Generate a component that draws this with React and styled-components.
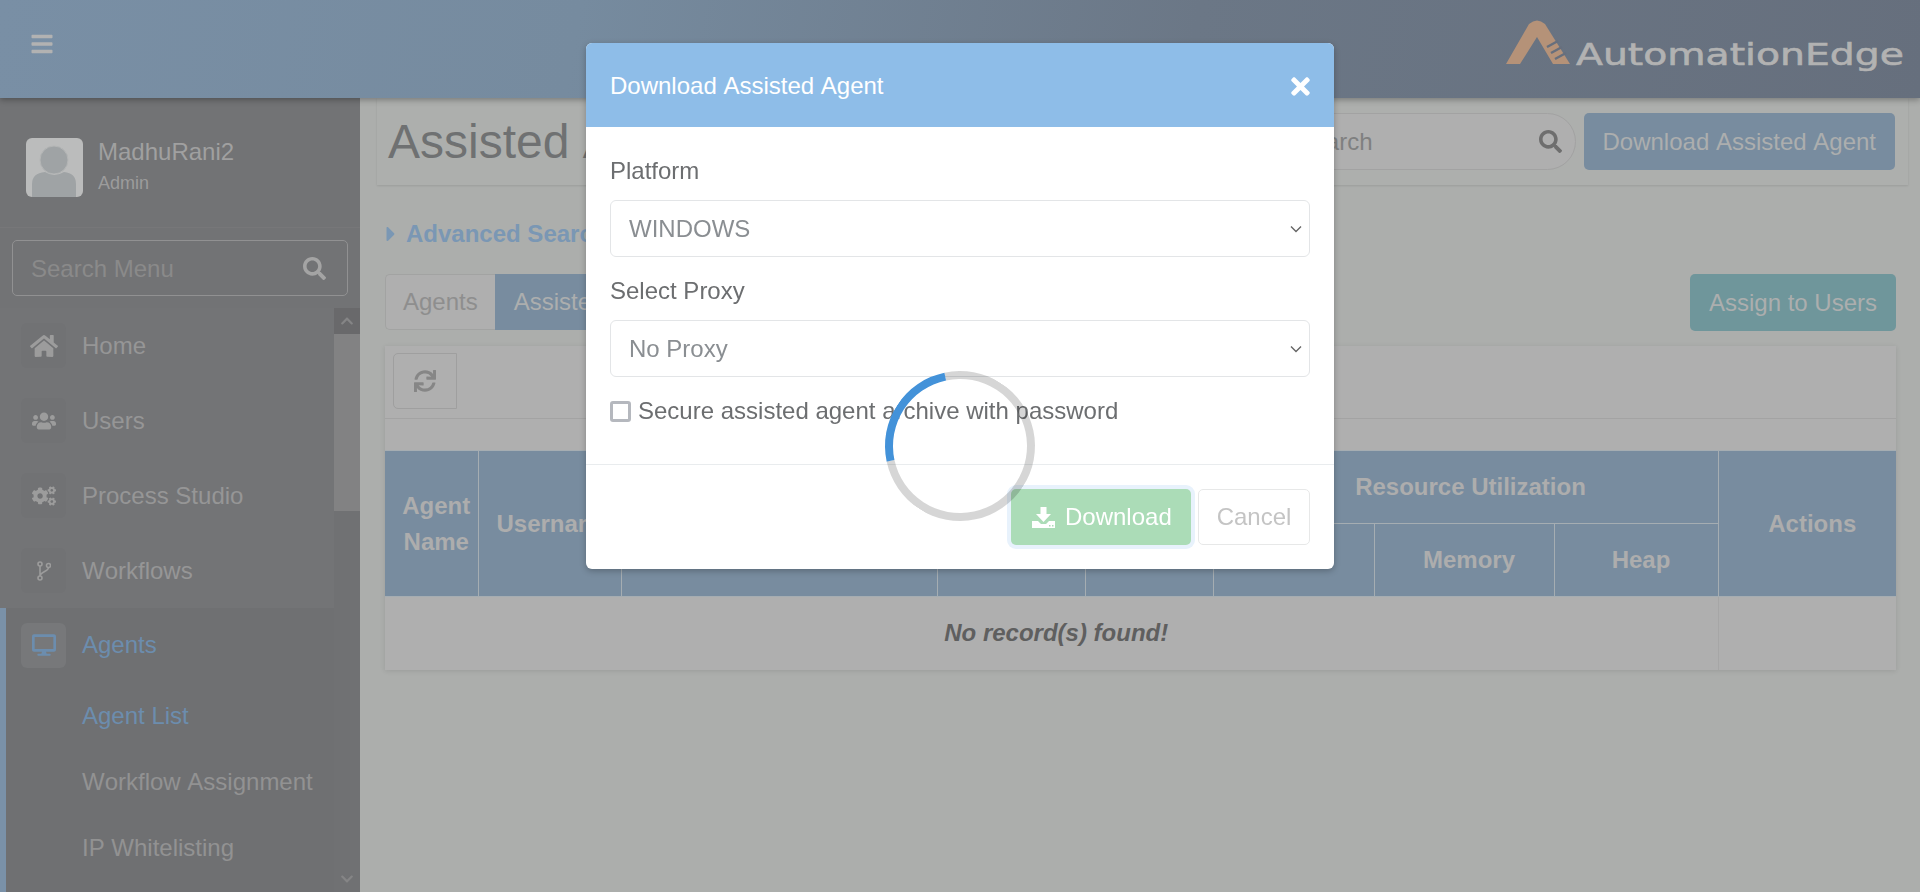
import React from 'react';
import styled, { createGlobalStyle } from 'styled-components';
import {
  FaBars, FaSearch, FaHome, FaUsers, FaCogs, FaDesktop, FaSync,
  FaTimes, FaCaretRight, FaChevronUp, FaChevronDown,
} from 'react-icons/fa';

const Global = createGlobalStyle`
  * { box-sizing: border-box; }
  html, body { margin: 0; padding: 0; height: 100%; overflow: hidden; }
  body { font-family: "Liberation Sans", Arial, sans-serif; font-size: 24px; font-kerning: none; background: #acaeac; }
`;

const Page = styled.div`
  height: 892px;
  display: flex;
  flex-direction: column;
  overflow: hidden;
`;

const TopBar = styled.header`
  flex: 0 0 98px;
  display: flex;
  align-items: center;
  justify-content: space-between;
  padding: 0 15px 0 30px;
  background: linear-gradient(100deg, #798fa5 0%, #768b9f 30%, #6b7786 62%, #666f7d 100%);
  box-shadow: 0 2px 6px rgba(0, 0, 0, 0.3);
  position: relative;
  z-index: 2;
  color: #b2b2b2;
`;

const MenuToggle = styled.span`
  display: flex;
  margin-top: -10px;
  font-size: 24px;
`;

const Logo = styled.svg`
  width: 400px;
  height: 54px;
  margin-top: -4px;
  display: block;
`;

const Body = styled.div`
  flex: 1;
  display: flex;
  min-height: 0;
`;

const Sidebar = styled.aside`
  flex: 0 0 360px;
  width: 360px;
  min-width: 0;
  display: flex;
  flex-direction: column;
  background: #727375;
  color: #9a9a9a;
`;

const UserPanel = styled.div`
  height: 130px;
  display: flex;
  align-items: flex-start;
  gap: 15px;
  padding: 40px 26px 0;
  border-bottom: 1px solid #777779;
`;

const Avatar = styled.svg`
  width: 57px;
  height: 59px;
  display: block;
  border-radius: 6px;
`;

const UserName = styled.div`
  font-size: 24px;
  line-height: 28px;
  color: #a0a0a0;
`;

const UserRole = styled.div`
  font-size: 18px;
  line-height: 24px;
  margin-top: 5px;
  color: #9c9c9c;
`;

const MenuSearch = styled.div`
  margin: 12px;
  height: 56px;
  display: flex;
  align-items: center;
  padding: 0 21px 0 18px;
  border: 1px solid #919192;
  border-radius: 5px;
  color: #a4a4a4;
  svg { font-size: 23px; flex: none; }
`;

const MenuInput = styled.input`
  flex: 1;
  width: 100%;
  min-width: 0;
  border: 0;
  outline: 0;
  background: transparent;
  font: inherit;
  padding: 2px 0 0;
  &::placeholder { color: #8a8a8a; opacity: 1; }
`;

const NavArea = styled.div`
  flex: 1;
  display: flex;
  min-height: 0;
`;

const NavList = styled.nav`
  flex: 1;
  display: flex;
  flex-direction: column;
  min-width: 0;
  background: #737476;
`;

const NavRow = styled.div`
  height: ${p => (p.$active ? 74 : 75)}px;
  display: flex;
  align-items: center;
  gap: 16px;
  padding-left: ${p => (p.$active ? 15 : 21)}px;
  color: ${p => (p.$active ? '#6c8dae' : '#969696')};
`;

const IconBox = styled.span`
  width: 45px;
  height: 45px;
  display: flex;
  align-items: center;
  justify-content: center;
  border-radius: 6px;
  background: ${p => (p.$active ? '#77787a' : '#717274')};
  color: ${p => (p.$active ? '#6c8dae' : '#9c9c9c')};
  font-size: ${p => p.$size || 24}px;
`;

const ActiveGroup = styled.div`
  flex: 1;
  background: #6f7072;
  border-left: 6px solid #7a91a8;
`;

const SubRow = styled.div`
  height: 66px;
  display: flex;
  align-items: center;
  padding-left: 76px;
  padding-top: 1px;
  color: ${p => (p.$active ? '#6c8dae' : '#929292')};
`;

const Rail = styled.div`
  flex: 0 0 26px;
  display: flex;
  flex-direction: column;
  background: #707173;
`;

const RailButton = styled.div`
  height: 26px;
  display: flex;
  align-items: center;
  justify-content: center;
  background: ${p => (p.$top ? '#69696b' : '#707173')};
  color: #858586;
  font-size: 14px;
  margin-top: ${p => (p.$top ? 0 : 'auto')};
`;

const RailThumb = styled.div`
  height: 177px;
  background: #828283;
`;

const Main = styled.main`
  flex: 1;
  min-width: 0;
  padding: 0 12px 0 17px;
`;

const TitleBar = styled.div`
  height: 87px;
  display: flex;
  align-items: center;
  gap: 8px;
  padding: 0 13px 0 11px;
  background: #adafad;
  box-shadow: 0 1px 2px rgba(0, 0, 0, 0.1);
`;

const Title = styled.h1`
  margin: 0 auto 0 0;
  font-size: 48px;
  font-weight: 400;
  color: #6f7172;
`;

const SearchPill = styled.div`
  width: 300px;
  height: 57px;
  display: flex;
  align-items: center;
  padding: 0 13px 0 20px;
  border: 1px solid #a2a2a2;
  border-radius: 29px;
  background: #afafaf;
  color: #6e6e6e;
  svg { font-size: 23px; flex: none; }
`;

const PillInput = styled.input`
  flex: 1;
  width: 100%;
  min-width: 0;
  border: 0;
  outline: 0;
  background: transparent;
  font: inherit;
  padding: 0;
  &::placeholder { color: #7f8080; opacity: 1; }
`;

const Button = styled.button`
  height: 57px;
  padding: 0 ${p => p.$pad || 19}px;
  border: 0;
  border-radius: 5px;
  font: inherit;
  color: #acaeae;
  background: ${p => p.$bg || '#788c9f'};
`;

const Content = styled.div`
  padding: 0 12px 0 8px;
`;

const Advanced = styled.div`
  height: 89px;
  padding-top: 8px;
  display: flex;
  align-items: center;
  gap: 6px;
  font-weight: 700;
  color: #7a97b4;
  svg { font-size: 24px; margin-left: -6px; margin-right: -3px; }
`;

const TabRow = styled.div`
  display: flex;
  align-items: flex-start;
  justify-content: space-between;
  height: 72px;
`;

const Tabs = styled.div`
  display: flex;
`;

const Tab = styled.div`
  height: 56px;
  display: flex;
  align-items: center;
  padding: 0 ${p => (p.$active ? 19 : 17)}px;
  border: ${p => (p.$active ? '0' : '1px solid #a2a3a2')};
  border-right: 0;
  border-radius: ${p => (p.$active ? '0' : '5px 0 0 5px')};
  background: ${p => (p.$active ? '#788c9f' : '#afafaf')};
  color: ${p => (p.$active ? '#acaeae' : '#8e8e8e')};
`;

const Card = styled.section`
  background: #afafaf;
  box-shadow: 0 1px 5px rgba(0, 0, 0, 0.1);
`;

const Toolbar = styled.div`
  height: 73px;
  padding: 7px 8px;
  border-bottom: 1px solid #a3a3a3;
`;

const RefreshButton = styled.div`
  width: 64px;
  height: 56px;
  display: flex;
  align-items: center;
  justify-content: center;
  border: 1px solid #9f9f9f;
  border-radius: 5px 0 0 5px;
  color: #868686;
  font-size: 22px;
`;

const Band = styled.div`
  height: 31px;
`;

const Table = styled.table`
  width: 100%;
  border-collapse: collapse;
  table-layout: fixed;
`;

const Th = styled.th`
  height: 73px;
  padding: 0 2px 0 12px;
  background: #788c9f;
  color: #adadad;
  font-weight: 700;
  line-height: 36px;
  text-align: center;
  border: 1px solid #a5adb2;
  &:first-child { border-left: 0; }
  &:last-child { border-right: 0; }
`;

const Td = styled.td`
  height: 73px;
  padding: 0 2px 0 12px;
  text-align: center;
  color: #5f5f5f;
  font-weight: 700;
  font-style: italic;
  border-left: ${p => (p.$split ? '1px solid #a6a6a6' : '0')};
`;

const Modal = styled.div`
  position: fixed;
  top: 43px;
  left: 586px;
  width: 748px;
  border-radius: 6px;
  overflow: hidden;
  background: #fff;
  box-shadow: 0 2px 6px rgba(0, 0, 0, 0.25);
  z-index: 5;
`;

const ModalHead = styled.div`
  height: 84px;
  display: flex;
  align-items: center;
  justify-content: space-between;
  padding: 2px 20px 0 24px;
  background: #8ebde8;
  color: #fff;
  svg { font-size: 27px; }
`;

const ModalBody = styled.div`
  padding: 25px 24px 33px;
  color: #6c6e70;
`;

const Label = styled.label`
  display: flex;
  align-items: center;
  height: 38px;
  margin-bottom: 10px;
`;

const Select = styled.select`
  display: block;
  width: 100%;
  height: 57px;
  margin-bottom: 15px;
  padding: 0 30px 0 18px;
  border: 1px solid #e3e5e7;
  border-radius: 6px;
  appearance: none;
  background: #fff url("data:image/svg+xml,%3Csvg xmlns='http://www.w3.org/2000/svg' viewBox='0 0 12 8'%3E%3Cpath d='M1 1.5l5 5 5-5' fill='none' stroke='%23666' stroke-width='1.4'/%3E%3C/svg%3E") no-repeat right 7px center / 12px 8px;
  font: inherit;
  color: #8a8e92;
`;

const CheckRow = styled.label`
  display: flex;
  align-items: center;
  gap: 7px;
  height: 40px;
  margin-top: -1px;
`;

const CheckBox = styled.span`
  width: 21px;
  height: 21px;
  border: 3px solid #b5b8be;
  border-radius: 3px;
`;

const ModalFoot = styled.div`
  display: flex;
  justify-content: flex-end;
  gap: 7px;
  padding: 24px 24px 24px;
  border-top: 1px solid #e9ecee;
`;

const DownloadButton = styled.button`
  width: 180px;
  height: 56px;
  display: flex;
  align-items: center;
  gap: 10px;
  padding: 0 0 0 21px;
  border: 0;
  border-radius: 5px;
  font: inherit;
  color: #fff;
  background: #abdcb7;
  box-shadow: 0 0 0 4px #e8f2fc;
  svg { flex: none; }
`;

const CancelButton = styled.button`
  width: 112px;
  height: 56px;
  border: 1px solid #e7e8e8;
  border-radius: 5px;
  background: #fff;
  font: inherit;
  color: #c4c4c4;
`;

const Spinner = styled.div`
  position: fixed;
  left: 885px;
  top: 371px;
  width: 150px;
  height: 150px;
  border: 8px solid rgba(0, 0, 0, 0.16);
  border-top-color: #4392d9;
  border-radius: 50%;
  transform: rotate(-57deg);
  z-index: 6;
`;

const ForkIcon = () => (
  <svg width="14" height="20" viewBox="0 0 14 20" fill="none" stroke="currentColor" strokeWidth="1.6">
    <circle cx="3" cy="3" r="2" />
    <circle cx="11.5" cy="4.5" r="2" />
    <circle cx="3" cy="17" r="2" />
    <path d="M3 5v10M11.5 6.5c0 4-8.5 4.500-8.500 8.500" />
  </svg>
);

const DownloadIcon = () => (
  <svg width="23" height="21" viewBox="0 0 23 21" fill="currentColor">
    <path d="M8.500 0h6v7h4.500l-7.500 8-7.500-8h4.500z" />
    <path d="M0 14h6l3 3h5l3-3h6v7H0z" />
    <path d="M17 18h1.500v1.500H17zM20 18h1.500v1.500H20z" fill="#abdcb7" />
  </svg>
);

const nav = [
  { label: 'Home', icon: <FaHome />, size: 28 },
  { label: 'Users', icon: <FaUsers /> },
  { label: 'Process Studio', icon: <FaCogs /> },
  { label: 'Workflows', icon: <ForkIcon /> },
];

const widths = [93, 143, 316, 148, 128, 161, 180, 164, 178];

export default function App() {
  return (
    <Page>
      <Global />
      <TopBar>
        <MenuToggle><FaBars /></MenuToggle>
        <Logo viewBox="0 0 400 54">
          <path d="M1 44 L24 4 Q32 -3 40 4 L65 44 L48 44 L32 17 L15 44 Z" fill="#b59278" />
          <path d="M42 27 L53 21 M46 33 L57 27 M50 39 L61 33" stroke="#676f7d" strokeWidth="2.5" />
          <text x="71" y="45" fill="#b2b2b2" stroke="#b2b2b2" strokeWidth="0.6" fontFamily="DejaVu Sans" fontSize="30" textLength="328" lengthAdjust="spacingAndGlyphs">AutomationEdge</text>
        </Logo>
      </TopBar>
      <Body>
        <Sidebar>
          <UserPanel>
            <Avatar viewBox="0 0 57 59">
              <rect width="57" height="59" fill="#bbbcbc" />
              <circle cx="28" cy="22" r="14" fill="#9fa3a5" stroke="#b4b6b6" strokeWidth="1" />
              <path d="M6 59 V46 Q6 35 19 34 Q28 40 38 34 Q50 35 50 46 V59 Z" fill="#9fa3a5" />
            </Avatar>
            <div>
              <UserName>MadhuRani2</UserName>
              <UserRole>Admin</UserRole>
            </div>
          </UserPanel>
          <MenuSearch>
            <MenuInput placeholder="Search Menu" readOnly />
            <FaSearch />
          </MenuSearch>
          <NavArea>
            <NavList>
              {nav.map(item => (
                <NavRow key={item.label}>
                  <IconBox $size={item.size}>{item.icon}</IconBox>
                  {item.label}
                </NavRow>
              ))}
              <ActiveGroup>
                <NavRow $active>
                  <IconBox $active><FaDesktop /></IconBox>
                  Agents
                </NavRow>
                <SubRow $active>Agent List</SubRow>
                <SubRow>Workflow Assignment</SubRow>
                <SubRow>IP Whitelisting</SubRow>
              </ActiveGroup>
            </NavList>
            <Rail>
              <RailButton $top><FaChevronUp /></RailButton>
              <RailThumb />
              <RailButton><FaChevronDown /></RailButton>
            </Rail>
          </NavArea>
        </Sidebar>
        <Main>
          <TitleBar>
            <Title>Assisted Agents</Title>
            <SearchPill>
              <PillInput placeholder="Search" readOnly />
              <FaSearch />
            </SearchPill>
            <Button>Download Assisted Agent</Button>
          </TitleBar>
          <Content>
            <Advanced><FaCaretRight />Advanced Search</Advanced>
            <TabRow>
              <Tabs>
                <Tab>Agents</Tab>
                <Tab $active>Assisted Agents</Tab>
              </Tabs>
              <Button $bg="#6f969b" $pad={19}>Assign to Users</Button>
            </TabRow>
            <Card>
              <Toolbar>
                <RefreshButton><FaSync /></RefreshButton>
              </Toolbar>
              <Band />
              <Table>
                <colgroup>
                  {widths.map((w, i) => <col key={i} style={{ width: w }} />)}
                </colgroup>
                <thead>
                  <tr>
                    <Th rowSpan={2}>Agent Name</Th>
                    <Th rowSpan={2}>Username</Th>
                    <Th rowSpan={2} />
                    <Th rowSpan={2} />
                    <Th rowSpan={2} />
                    <Th colSpan={3}>Resource Utilization</Th>
                    <Th rowSpan={2}>Actions</Th>
                  </tr>
                  <tr>
                    <Th />
                    <Th>Memory</Th>
                    <Th>Heap</Th>
                  </tr>
                </thead>
                <tbody>
                  <tr>
                    <Td colSpan={8}>No record(s) found!</Td>
                    <Td $split />
                  </tr>
                </tbody>
              </Table>
            </Card>
          </Content>
        </Main>
      </Body>
      <Modal>
        <ModalHead>
          Download Assisted Agent
          <FaTimes />
        </ModalHead>
        <ModalBody>
          <Label>Platform</Label>
          <Select defaultValue="WINDOWS">
            <option>WINDOWS</option>
          </Select>
          <Label>Select Proxy</Label>
          <Select defaultValue="No Proxy">
            <option>No Proxy</option>
          </Select>
          <CheckRow>
            <CheckBox />
            Secure assisted agent archive with password
          </CheckRow>
        </ModalBody>
        <ModalFoot>
          <DownloadButton><DownloadIcon />Download</DownloadButton>
          <CancelButton>Cancel</CancelButton>
        </ModalFoot>
      </Modal>
      <Spinner />
    </Page>
  );
}
